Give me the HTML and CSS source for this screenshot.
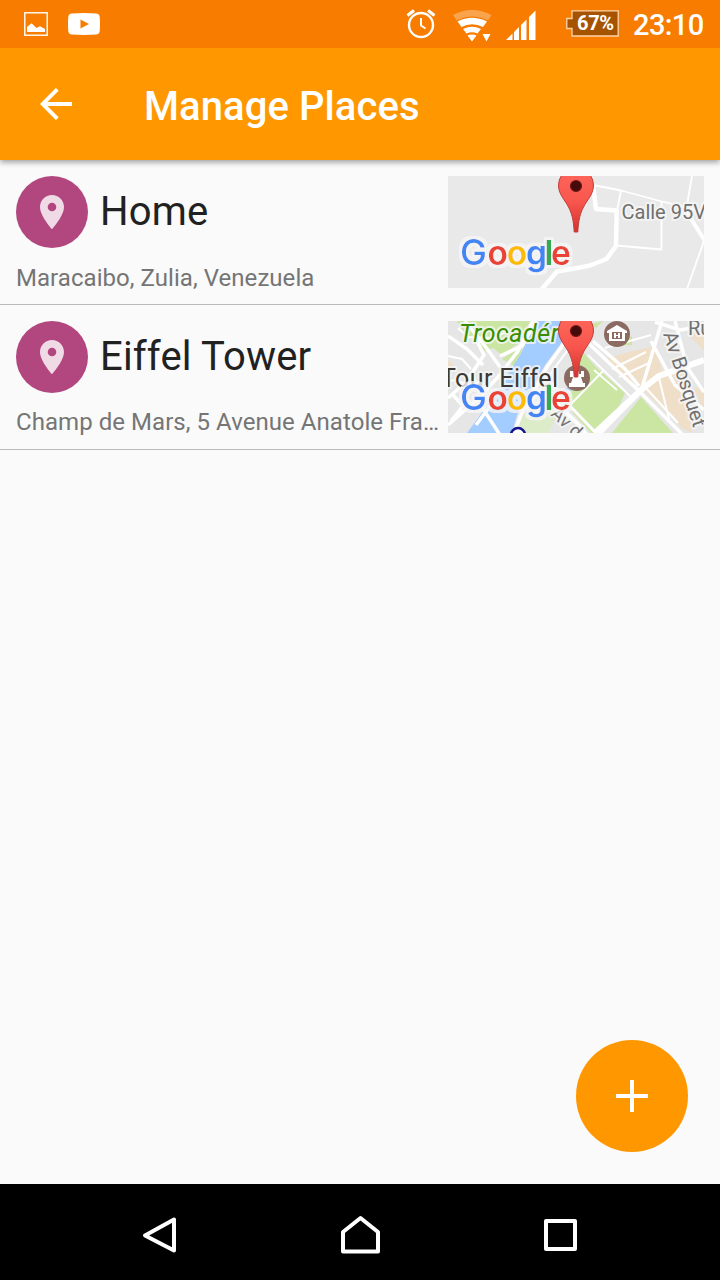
FILE: index.html
```html
<!DOCTYPE html>
<html lang="en">
<head>
<meta charset="utf-8">
<title>Manage Places</title>
<link rel="stylesheet" href="styles.css">
</head>
<body>
<svg width="0" height="0" class="defs" aria-hidden="true">
  <defs>
    <linearGradient id="pinFill" x1="0" y1="0" x2="0" y2="1">
      <stop offset="0" stop-color="#fd685c"/><stop offset=".5" stop-color="#f9574e"/><stop offset="1" stop-color="#d33330"/>
    </linearGradient>
    <filter id="outline" x="-10%" y="-20%" width="120%" height="140%">
      <feMorphology in="SourceAlpha" operator="dilate" radius="3" result="wide"/>
      <feGaussianBlur in="wide" stdDeviation=".7" result="soft"/>
      <feFlood flood-color="#f6f6f6" flood-opacity=".8"/>
      <feComposite in2="soft" operator="in" result="halo"/>
      <feMerge><feMergeNode in="halo"/><feMergeNode in="SourceGraphic"/></feMerge>
    </filter>
    <symbol id="marker" viewBox="0 0 40 64">
      <path d="M2.500 16C3 25 9 30 12.500 37C16 44 17.500 50 18.200 62H21.800C22.500 50 24 44 27.500 37C31 30 37 25 37.500 16C37.500 5 30 -1 20 -1S2.500 5 2.500 16Z" fill="url(#pinFill)" stroke="#bd403a" stroke-width="1"/>
      <circle cx="20" cy="16" r="5.500" fill="#450b0b" stroke="#741716" stroke-width="1.200"/>
    </symbol>
    <symbol id="place" viewBox="0 0 24 34">
      <path fill-rule="evenodd" d="M12 0C5.400 0 0 5.300 0 12c0 9 12 22.300 12 22.300S24 21 24 12C24 5.300 18.600 0 12 0Zm0 16.300a4.300 4.300 0 1 1 0-8.600 4.300 4.300 0 0 1 0 8.600Z" fill="#f0dae6"/>
    </symbol>
  </defs>
</svg>
<div class="screen">
  <header class="status">
    <div class="status-left">
      <svg width="24" height="24" viewBox="0 0 24 24"><rect x=".8" y=".8" width="22.400" height="22.400" fill="none" stroke="#fff" stroke-width="1.400"/><path d="M3 20V15L7.500 11.300 12.500 16 16 14.200 21 17V20Z" fill="#fff"/></svg>
      <svg width="32" height="22" viewBox="0 0 32 22"><path fill-rule="evenodd" d="M4 .5Q16-.3 28 .5 31.500.7 31.700 4 32.300 11 31.700 18 31.500 21.300 28 21.500 16 22.300 4 21.500.5 21.300.3 18-.3 11 .3 4 .5.700 4 .5ZM12.500 6.500V15.500L21 11Z" fill="#fff"/></svg>
    </div>
    <div class="status-right">
      <svg class="alarm" width="30" height="30" viewBox="0 0 30 30" fill="none" stroke="#fff"><circle cx="15" cy="16" r="12" stroke-width="2.400"/><path d="M15 9V16.500L19.500 19.500" stroke-width="2"/><path d="M1.500 6.500 8 1.500M28.500 6.500 22 1.500" stroke-width="3.200"/></svg>
      <svg class="wifi" width="39" height="32" viewBox="0 0 39 32"><path d="M0 5Q19 -5 38.500 5L35 10.500Q19 2.500 3.500 10.500Z" fill="#fff" opacity=".3"/><path d="M4.500 11.500Q19 4 34 11.500L30 17Q19 11.500 8.500 17ZM10 19Q19 14.500 28 19L24.500 23.500Q19 21 13.500 23.500ZM14.500 25.500Q19 23.500 23.500 25.500L19 31.500ZM29.500 24H37.500L33.500 31.500Z" fill="#fff"/></svg>
      <svg class="signal" width="30" height="30" viewBox="0 0 30 30"><path d="M0 30 6.500 23.500V30ZM8 22 13 17V30H8ZM15 15 20.500 9.500V30H15ZM23 7 29.500 .5V30H23Z" fill="#fff"/></svg>
      <div class="battery">
        <svg width="53" height="27" viewBox="0 0 53 27"><path d="M6 .8H52.200V26H6V18.500H.8V8.500H6Z" fill="#a65300" stroke="#ffd3a8" stroke-width="1.300"/></svg>
        <span class="battery-level">67%</span>
      </div>
      <span class="clock">23:10</span>
    </div>
  </header>
  <div class="appbar">
    <svg width="32" height="32" viewBox="0 0 32 32"><path d="M32 16H3M17.300 1.300 2.700 16 17.300 30.700" fill="none" stroke="#fff" stroke-width="3.900"/></svg>
    <h1 class="title">Manage Places</h1>
  </div>
  <main class="list">
    <article class="place">
      <div class="info">
        <div class="head">
          <span class="avatar"><svg width="24" height="34"><use href="#place"/></svg></span>
          <h2 class="name">Home</h2>
        </div>
        <p class="address first">Maracaibo, Zulia, Venezuela</p>
      </div>
      <svg class="map" width="256" height="112" viewBox="0 0 256 112">
        <rect width="256" height="112" fill="#e9e9e9"/>
        <g fill="none" stroke="#fff" stroke-linejoin="round">
          <path d="M93 114 109 95.500 132 91.500 142 89.500 158.500 83 168 70 168.700 34.500 148 33 145 9" stroke-width="4.500"/>
          <path d="M145 9 173 14.500 214 25.500 256 36M173 14.500 169 35M168 69.500 213.500 73.500V25M244 0 238.500 32M256 65 239 113" stroke-width="1.800"/>
          <path d="M239 34 245 46 257 65" stroke-width="4"/>
        </g>
        <text class="road halo" x="173.500" y="42.500">Calle 95V</text>
        <text class="google" y="89"><tspan class="cap" x="12" fill="#4285f4">G</tspan><tspan x="39.500" fill="#ea4335">o</tspan><tspan x="58.800" fill="#fbbc05">o</tspan><tspan x="78" fill="#4285f4">g</tspan><tspan x="96.500" fill="#34a853">l</tspan><tspan x="103" fill="#ea4335">e</tspan></text>
        <use href="#marker" x="108" y="-6" width="40" height="64"/>
      </svg>
    </article>
    <article class="place">
      <div class="info">
        <div class="head">
          <span class="avatar"><svg width="24" height="34"><use href="#place"/></svg></span>
          <h2 class="name">Eiffel Tower</h2>
        </div>
        <p class="address">Champ de Mars, 5 Avenue Anatole Fra…</p>
      </div>
      <svg class="map" width="256" height="112" viewBox="0 0 256 112">
        <rect width="256" height="112" fill="#e6e6e6"/>
        <path d="M9 0H82L72 21 54 34 45 27 36 30 29 17 19 16ZM54 38 75 25 68 46Z" fill="#cbe6a3"/>
        <path d="M89 0H125L112 24 97 44 69 94 64 112H19L47 74 72 34Z" fill="#a3ccff"/>
        <path d="M72 95 92 84 110 92 100 112H68Z" fill="#dcebc8"/>
        <path d="M0 39 6 45 0 49ZM0 55 5 57 3 65 0 66Z" fill="#f0dfc8"/>
        <path d="M134 50 139 43 142 48 136 54ZM115 69 120 66 124 70Z" fill="#8dbcf7"/>
        <path d="M134 30 147 45 177 72 170 88 147 112H143L125 92 119 78 126 66ZM193 76 225 112H164ZM143 3 155 0 148 7ZM163 25 184 15 184 24Z" fill="#cbe6a3"/>
        <path d="M157 38 180 31 208 25 212 43 225 80 225 97 192 66 177 58ZM242 15 256 7V30ZM246 68 256 65V90ZM224 35 232 50 227 52ZM206 58 238 48 240 70 244 112 232 106Z" fill="#f0dfc8"/>
        <g fill="none" stroke="#fff">
          <path d="M0 15 19 28 35 44M17 0 40 29 52 46M0 77 18 61 36 34 28 18M0 104 33 75 50 56 70 30 85 0M5 74 15 85 3 100M30 80 52 114M46 80 28 104M52 35 74 25 88 0M66 112 73 94 99 46 114 25 127 0" stroke-width="3.500"/>
          <path d="M0 35 14 38 23 48M10 7 20 16 47 17 61 9M0 61 9 58 20 66M24 54 30 63M79 88 108 45 122 26M88 92 104 64" stroke-width="2"/>
          <path d="M104 78 133 106 140 116" stroke-width="4"/>
          <path d="M125 7 158 39 190 69 235 114M145 20 177 48 191 65" stroke-width="3.500"/>
          <path d="M140 34 184 77M146 49 169 69" stroke-width="1.800"/>
          <path d="M147 112 193 69 211 55 256 39" stroke-width="6"/>
          <path d="M214 0 205 30 193 70M207 1 232 9 256 5M203 20 227 64 256 89M227 0 239 46 256 71" stroke-width="3.500"/>
          <path d="M157 27 203 14M164 48 198 31M171 56 201 42M197 66 230 102M211 57 222 102M219 53 247 40M122 84 155 50" stroke-width="2"/>
          <path d="M122 85 148 112M150 115 190 74" stroke-width="3"/>
        </g>
        <text class="park halo" x="11" y="20.500" textLength="100">Trocadér</text>
        <text class="tower halo" x="-7" y="66" textLength="117">Tour Eiffel</text>
        <text class="road halo small" transform="translate(102 94) rotate(43)">Av d</text>
        <text class="road halo" x="240" y="14">Ru</text>
        <text class="road halo" transform="translate(215 13) rotate(72)" textLength="99">Av Bosquet</text>
        <circle cx="70" cy="114" r="7" fill="#fff" stroke="#14148c" stroke-width="2.500"/>
        <g fill="#8b6b61"><circle cx="169" cy="13" r="13"/><circle cx="129" cy="57" r="13"/></g>
        <path d="M159 10 169 4 179 10V12H177V20H161V12H159Z" fill="#fff"/>
        <path d="M164 11H174V18H164Z" fill="#8b6b61"/><path d="M166 12H168V14H170V12H172V17H170V15H168V17H166Z" fill="#fff"/>
        <path d="M122 50H126V53H128V50H131V53H133V50H136V56H133L135 62H137V66H121V62H123L125 56H122Z" fill="#fff"/>
        <text class="google" y="89"><tspan class="cap" x="12" fill="#4285f4">G</tspan><tspan x="39.500" fill="#ea4335">o</tspan><tspan x="58.800" fill="#fbbc05">o</tspan><tspan x="78" fill="#4285f4">g</tspan><tspan x="96.500" fill="#34a853">l</tspan><tspan x="103" fill="#ea4335">e</tspan></text>
        <use href="#marker" x="108" y="-6" width="40" height="64"/>
      </svg>
    </article>
  </main>
  <div class="actions">
    <button class="fab" aria-label="Add place"><svg width="32" height="32" viewBox="0 0 32 32"><path d="M16 0V32M0 16H32" stroke="#fff" stroke-width="4"/></svg></button>
  </div>
  <nav class="navbar">
    <svg width="40" height="40" viewBox="0 0 40 40"><path d="M34 4.500V35.500L5 20.500Z"/></svg>
    <svg width="40" height="40" viewBox="0 0 40 40"><path d="M20.500 3 3 17V36.500H38V17Z"/></svg>
    <svg width="40" height="40" viewBox="0 0 40 40"><rect x="6" y="6" width="29" height="28"/></svg>
  </nav>
</div>
</body>
</html>
```
FILE: styles.css
```css
* { box-sizing: border-box; }
body { margin: 0; font-family: Roboto, "Liberation Sans", sans-serif; background: #fafafa; }
h1, h2, p { margin: 0; font-weight: 400; }
svg { display: block; flex: none; }
.defs { position: absolute; }
.screen { width: 720px; height: 1280px; display: flex; flex-direction: column; background: #fafafa; overflow: hidden; }

.status { height: 48px; flex: none; background: #f77c00; display: flex; justify-content: space-between; padding: 0 16px 0 24px; color: #fff; z-index: 2; }
.status-left { display: flex; align-items: center; gap: 20px; }
.status-right { display: flex; align-items: flex-start; }
.alarm { margin-top: 9px; }
.wifi { margin: 10px 0 0 17px; }
.signal { margin: 10px 0 0 14px; }
.battery { display: grid; margin: 10px 0 0 30px; width: 53px; height: 27px; }
.battery > * { grid-area: 1 / 1; }
.battery-level { font-size: 20px; line-height: 27px; font-weight: 700; padding-left: 11px; letter-spacing: -0.3px; }
.clock { width: 71px; margin-left: 14px; font-size: 29px; font-weight: 500; line-height: 51px; white-space: nowrap; letter-spacing: -0.6px; }

.appbar { height: 112px; flex: none; background: #ff9800; display: flex; align-items: center; padding-left: 40px; gap: 72px; box-shadow: 0 2px 6px rgba(0, 0, 0, .4); z-index: 1; }
.title { color: #fff; font-size: 40px; font-weight: 500; line-height: 48px; padding-top: 6px; letter-spacing: 0.08px; }

.list { flex: 1; }
.place { height: 145px; display: flex; padding: 16px 16px 0; border-bottom: 1px solid #b9b9b9; }
.info { width: 432px; }
.head { display: flex; align-items: center; gap: 12px; height: 72px; }
.avatar { width: 72px; height: 72px; border-radius: 50%; background: #b2467f; display: flex; align-items: center; justify-content: center; }
.name { color: #212121; font-size: 40px; line-height: 48px; letter-spacing: 0.15px; }
.address { color: #757575; font-size: 24px; line-height: 32px; margin-top: 13px; white-space: nowrap; letter-spacing: 0.05px; }
.address.first { margin-top: 14px; }

.map { overflow: hidden; }
.halo { paint-order: stroke; stroke: #f6f6f6; stroke-opacity: .8; stroke-width: 4px; stroke-linejoin: round; }
.road { font-size: 20px; fill: #707070; }
.small { font-size: 18px; }
.park { font-size: 25px; font-style: italic; fill: #388e00; }
.tower { font-size: 25px; fill: #3c3833; }
.google { font-family: Inter, sans-serif; font-size: 33.5px; font-weight: 600; filter: url(#outline); }
.cap { font-size: 36px; font-weight: 500; }

.actions { display: flex; justify-content: flex-end; padding: 0 32px 32px; }
.fab { width: 112px; height: 112px; padding: 0; border: 0; border-radius: 50%; background: #ff9800; display: flex; align-items: center; justify-content: center; }
.navbar { height: 96px; flex: none; background: #000; display: flex; justify-content: center; align-items: center; gap: 160px; padding-top: 6px; fill: none; stroke: #fff; stroke-width: 4px; stroke-linejoin: round; }
```
